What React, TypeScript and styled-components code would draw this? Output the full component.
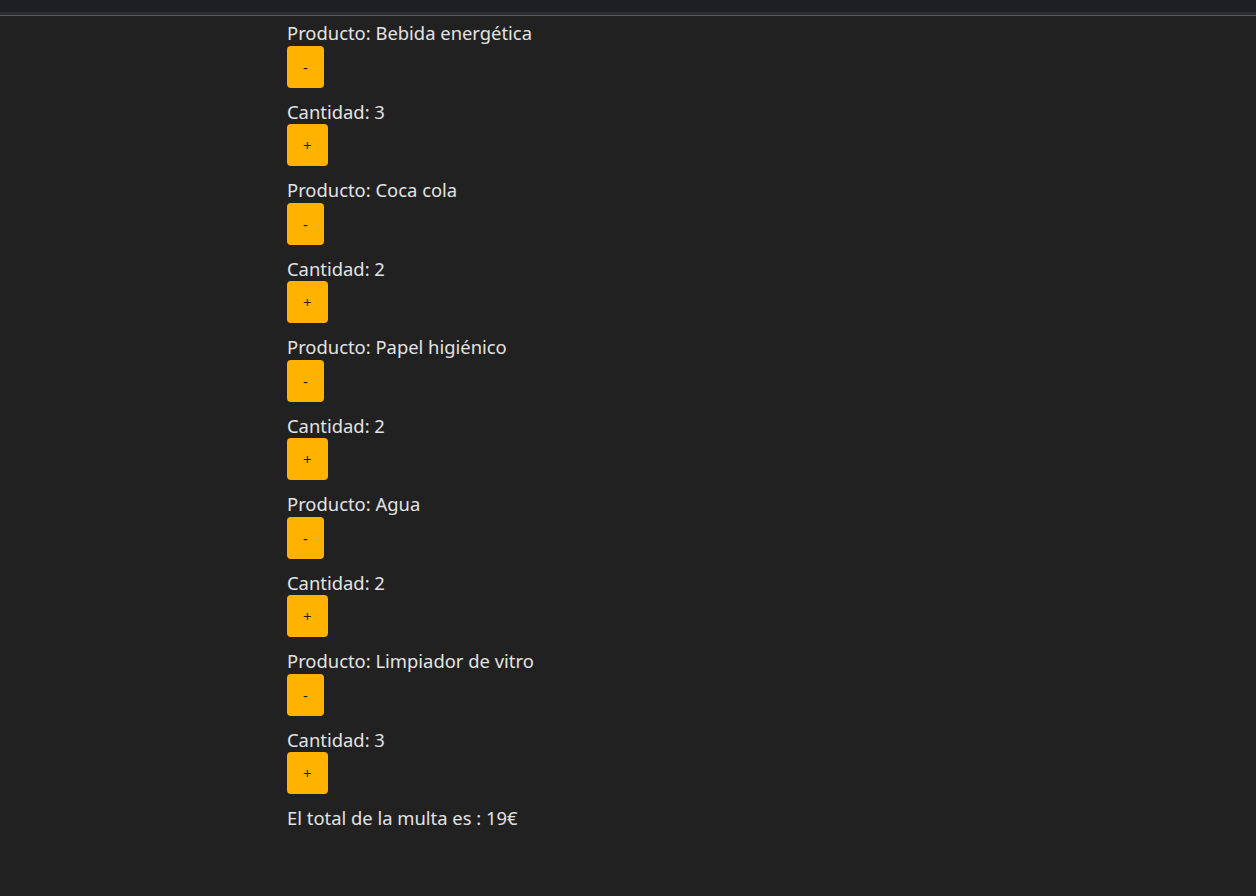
import React, { useState } from 'react';
import styled, { createGlobalStyle } from 'styled-components';

const GlobalStyle = createGlobalStyle`
  html, body {
    margin: 0;
    padding: 0;
    background: #212121;
  }
  body {
    font-family: 'Noto Sans', 'Open Sans', sans-serif;
    color: #e3e3e3;
  }
`;

const TopBar = styled.div`
  height: 12px;
  background: #1e1f22;
`;

const TopStrip = styled.div`
  height: 3px;
  background: #2b2d30;
  border-bottom: 1px solid #5c5c5c;
`;

const Page = styled.main`
  padding: 4px 0 40px 287px;
`;

const Label = styled.p`
  margin: 0;
  font-size: 18.4px;
  line-height: 25px;
  color: #e3e3e3;
`;

const QtyButton = styled.button`
  display: block;
  height: 42px;
  padding: 0 16px;
  margin: 0.5px 0 11px;
  border: none;
  border-radius: 4px;
  background: #ffb300;
  color: #1e1e1e;
  font-family: 'Noto Sans', 'Open Sans', sans-serif;
  font-size: 15px;
  cursor: pointer;
`;

interface Item {
  id: number;
  nombre: string;
  cantidad: number;
}

const initial: Item[] = [
  { id: 1, nombre: 'Bebida energética', cantidad: 3 },
  { id: 2, nombre: 'Coca cola', cantidad: 2 },
  { id: 3, nombre: 'Papel higiénico', cantidad: 2 },
  { id: 4, nombre: 'Agua', cantidad: 2 },
  { id: 5, nombre: 'Limpiador de vitro', cantidad: 3 },
];

const App: React.FC = () => {
  const [items, setItems] = useState<Item[]>(initial);

  const cambiar = (id: number, delta: number) => {
    setItems((prev) =>
      prev.map((it) =>
        it.id === id ? { ...it, cantidad: Math.max(0, it.cantidad + delta) } : it
      )
    );
  };

  const total = 19;

  return (
    <>
      <GlobalStyle />
      <TopBar />
      <TopStrip />
      <Page>
        {items.map((item) => (
          <div key={item.id}>
            <Label>Producto: {item.nombre}</Label>
            <QtyButton onClick={() => cambiar(item.id, -1)}>-</QtyButton>
            <Label>Cantidad: {item.cantidad}</Label>
            <QtyButton onClick={() => cambiar(item.id, 1)}>+</QtyButton>
          </div>
        ))}
        <Label>El total de la multa es : {total}€</Label>
      </Page>
    </>
  );
};

export default App;
